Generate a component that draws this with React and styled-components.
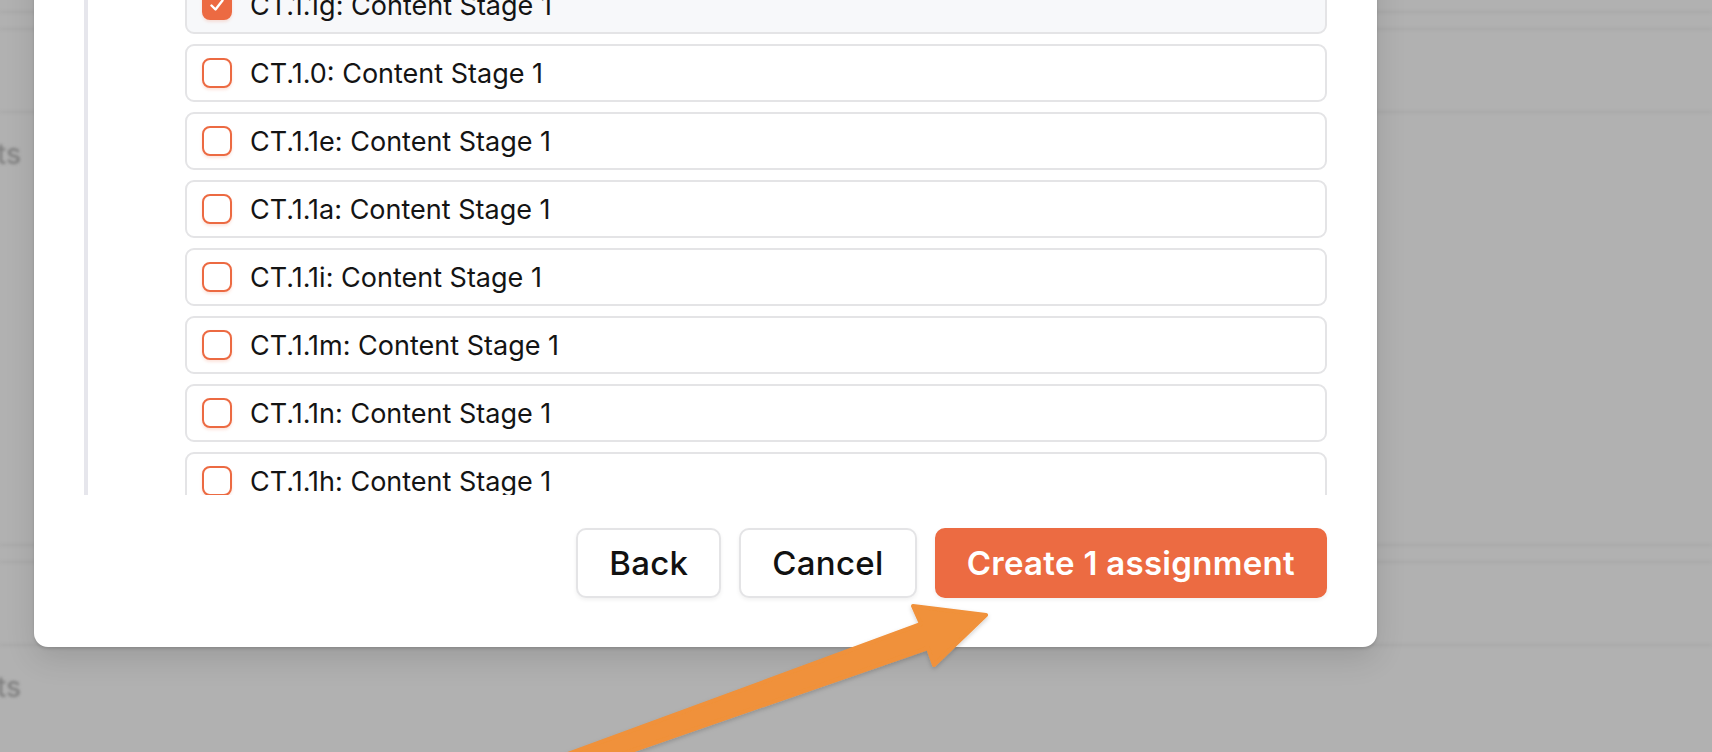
import React from 'react'
import styled, { createGlobalStyle } from 'styled-components'

const GlobalStyle = createGlobalStyle`
  * { box-sizing: border-box; }
  html, body {
    margin: 0;
    height: 100%;
    overflow: hidden;
    font-family: Inter, "Liberation Sans", sans-serif;
  }
  #root { height: 100%; }
`

const Screen = styled.div`
  position: relative;
  width: 100%;
  height: 100vh;
  overflow: hidden;
  background: #b1b1b1;
`

// dimmed page that sits behind the dialog
const Backdrop = styled.div`
  filter: blur(1.4px);
`

const Section = styled.div`
  height: 533px;
  padding-top: 11px;
`

const Band = styled.div`
  height: 19px;
  border-top: 2px solid #a8a8a8;
  border-bottom: 2px solid #a8a8a8;
`

const SectionRow = styled.div`
  margin-top: 81px;
  border-top: 2px solid #a8a8a8;
  padding-top: 24px;
`

const SectionLabel = styled.div`
  width: 21px;
  display: flex;
  justify-content: flex-end;
  font-size: 28px;
  font-weight: 500;
  color: #808080;
  white-space: nowrap;
`

const Dialog = styled.div`
  position: absolute;
  left: 34px;
  bottom: 105px;
  width: 1343px;
  background: #fff;
  border-radius: 14px;
  padding: 24px 50px 49px 50px;
  box-shadow: 0 2px 3px rgba(0, 0, 0, 0.12), 0 12px 30px rgba(0, 0, 0, 0.12);
`

const ListFrame = styled.div`
  height: 519px;
  overflow: hidden;
  border-left: 4px solid #e6e6ec;
  padding-left: 97px;
  display: flex;
  flex-direction: column;
  gap: 10px;
`

const Item = styled.label`
  flex: none;
  height: 58px;
  display: flex;
  align-items: center;
  gap: 18px;
  padding: 0 15px;
  border: 2px solid #e4e4e6;
  border-radius: 9px;
  background: ${p => (p.checked ? '#f7f8fa' : '#fff')};
`

const Box = styled.span`
  flex: none;
  width: 30px;
  height: 30px;
  border-radius: 8px;
  border: 2px solid #ec6a42;
  background: ${p => (p.checked ? '#ec6a42' : '#fff')};
  box-shadow: 0 2px 3px rgba(236, 106, 66, 0.18);
  display: flex;
  align-items: center;
  justify-content: center;
`

const ItemText = styled.span`
  font-size: 27px;
  color: #141414;
`

const Footer = styled.div`
  margin-top: 33px;
  display: flex;
  justify-content: flex-end;
  gap: 18px;
`

const Button = styled.button`
  height: 70px;
  padding: 0 ${p => (p.primary ? 30 : 31)}px;
  border-radius: 10px;
  font-family: inherit;
  font-size: 33px;
  font-weight: ${p => (p.primary ? 600 : 500)};
  letter-spacing: 0.3px;
  color: ${p => (p.primary ? '#fff' : '#111')};
  background: ${p => (p.primary ? '#ec6b42' : '#fff')};
  border: 2px solid ${p => (p.primary ? '#ec6b42' : '#e4e4e6')};
  box-shadow: 0 2px 4px rgba(0, 0, 0, 0.06);
`

const Pointer = styled.svg`
  position: absolute;
  inset: 0;
  width: 100%;
  height: 100%;
  pointer-events: none;
`

const items = [
  { code: 'CT.1.1g', checked: true },
  { code: 'CT.1.0' },
  { code: 'CT.1.1e' },
  { code: 'CT.1.1a' },
  { code: 'CT.1.1i' },
  { code: 'CT.1.1m' },
  { code: 'CT.1.1n' },
  { code: 'CT.1.1h' },
  { code: 'CT.1.1b' },
]

function Check() {
  return (
    <svg width="18" height="18" viewBox="0 0 18 18">
      <polyline points="3.5,9.5 7.5,13.5 14.5,4.5" fill="none" stroke="#fff" strokeWidth="2.4" strokeLinecap="round" strokeLinejoin="round" />
    </svg>
  )
}

export default function App() {
  return (
    <>
      <GlobalStyle />
      <Screen>
        <Backdrop>
          {[0, 1].map(i => (
            <Section key={i}>
              <Band />
              <SectionRow>
                <SectionLabel>Contents</SectionLabel>
              </SectionRow>
            </Section>
          ))}
        </Backdrop>

        <Dialog>
          <ListFrame>
            {items.map(item => (
              <Item key={item.code} checked={item.checked}>
                <Box checked={item.checked}>{item.checked && <Check />}</Box>
                <ItemText>{item.code}: Content Stage 1</ItemText>
              </Item>
            ))}
          </ListFrame>
          <Footer>
            <Button>Back</Button>
            <Button>Cancel</Button>
            <Button primary>Create 1 assignment</Button>
          </Footer>
        </Dialog>

        <Pointer viewBox="0 0 1712 752">
          <defs>
            <filter id="arrowShadow" x="-10%" y="-10%" width="120%" height="130%">
              <feDropShadow dx="0" dy="2" stdDeviation="2" floodColor="#000" floodOpacity="0.18" />
            </filter>
          </defs>
          <polygon
            points="986,615 913,606 921,624 560,757 614,757 928,648 934,665"
            fill="#f0913a"
            stroke="#f0913a"
            strokeWidth="4"
            strokeLinejoin="round"
            filter="url(#arrowShadow)"
          />
        </Pointer>
      </Screen>
    </>
  )
}
